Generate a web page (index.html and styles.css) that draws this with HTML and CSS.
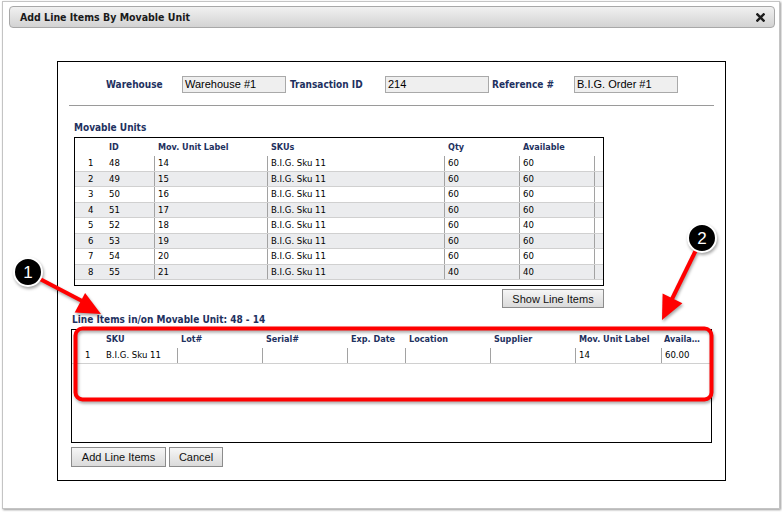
FILE: index.html
```html
<!DOCTYPE html>
<html>
<head>
<meta charset="utf-8">
<link rel="stylesheet" href="styles.css">
</head>
<body>
<div class="dialog">
  <div class="titlebar">
    <span class="title">Add Line Items By Movable Unit</span>
    <svg class="close" width="9" height="9" viewBox="0 0 9 9"><path d="M1.4 1.4 L7.6 7.6 M7.6 1.4 L1.4 7.6" stroke="#1e1e1e" stroke-width="2.4" stroke-linecap="square"/></svg>
  </div>
  <div class="panel">
    <div class="hdr">
      <span class="lbl l1">Warehouse</span><span class="inp">Warehouse #1</span>
      <span class="lbl l2">Transaction ID</span><span class="inp">214</span>
      <span class="lbl l3">Reference #</span><span class="inp">B.I.G. Order #1</span>
    </div>
    <div class="rule"></div>
    <div class="mu">
      <div class="sect">Movable Units</div>
      <div class="box mu-box">
        <div class="row mu-row head"><span class="c"></span><span class="c">ID</span><span class="c">Mov. Unit Label</span><span class="c">SKUs</span><span class="c">Qty</span><span class="c">Available</span></div>
        <div class="row mu-row data"><span class="c n">1</span><span class="c">48</span><span class="c s">14</span><span class="c s">B.I.G. Sku 11</span><span class="c s">60</span><span class="c s e">60</span></div>
        <div class="row mu-row data alt"><span class="c n">2</span><span class="c">49</span><span class="c s">15</span><span class="c s">B.I.G. Sku 11</span><span class="c s">60</span><span class="c s e">60</span></div>
        <div class="row mu-row data"><span class="c n">3</span><span class="c">50</span><span class="c s">16</span><span class="c s">B.I.G. Sku 11</span><span class="c s">60</span><span class="c s e">60</span></div>
        <div class="row mu-row data alt"><span class="c n">4</span><span class="c">51</span><span class="c s">17</span><span class="c s">B.I.G. Sku 11</span><span class="c s">60</span><span class="c s e">60</span></div>
        <div class="row mu-row data"><span class="c n">5</span><span class="c">52</span><span class="c s">18</span><span class="c s">B.I.G. Sku 11</span><span class="c s">60</span><span class="c s e">40</span></div>
        <div class="row mu-row data alt"><span class="c n">6</span><span class="c">53</span><span class="c s">19</span><span class="c s">B.I.G. Sku 11</span><span class="c s">60</span><span class="c s e">60</span></div>
        <div class="row mu-row data"><span class="c n">7</span><span class="c">54</span><span class="c s">20</span><span class="c s">B.I.G. Sku 11</span><span class="c s">60</span><span class="c s e">60</span></div>
        <div class="row mu-row data alt"><span class="c n">8</span><span class="c">55</span><span class="c s">21</span><span class="c s">B.I.G. Sku 11</span><span class="c s">40</span><span class="c s e">40</span></div>
      </div>
      <div class="btnrow"><button class="btn show">Show Line Items</button></div>
    </div>
    <div class="li">
      <div class="sect li-title">Line Items in/on Movable Unit: 48 - 14</div>
      <div class="box li-box">
        <div class="row li-row head"><span class="c"></span><span class="c">SKU</span><span class="c">Lot#</span><span class="c">Serial#</span><span class="c">Exp. Date</span><span class="c">Location</span><span class="c">Supplier</span><span class="c">Mov. Unit Label</span><span class="c trunc">Available</span></div>
        <div class="row li-row data"><span class="c n">1</span><span class="c">B.I.G. Sku 11</span><span class="c s"></span><span class="c s"></span><span class="c s"></span><span class="c s"></span><span class="c s"></span><span class="c s">14</span><span class="c s">60.00</span></div>
      </div>
      <div class="actions"><button class="btn add">Add Line Items</button><button class="btn cancel">Cancel</button></div>
    </div>
  </div>
</div>
<svg class="annot" width="782" height="512" viewBox="0 0 782 512">
  <g class="shadow">
    <rect x="75.5" y="328.5" width="636" height="71" rx="7" ry="7" fill="none" stroke="#ff0000" stroke-width="4"/>
    <line x1="40" y1="279" x2="84" y2="302" stroke="#ff0000" stroke-width="4"/>
    <polygon points="101,314 74.7,312.4 85.1,293" fill="#ff0000"/>
    <line x1="696" y1="250" x2="672" y2="299" stroke="#ff0000" stroke-width="4"/>
    <polygon points="662,320 682.4,303.2 662.6,293.6" fill="#ff0000"/>
    <circle cx="28" cy="272" r="14" fill="#000" stroke="#fff" stroke-width="2"/>
    <circle cx="702" cy="238" r="14" fill="#000" stroke="#fff" stroke-width="2"/>
  </g>
  <text x="28" y="278" class="num">1</text>
  <text x="702" y="244" class="num">2</text>
</svg>
</body>
</html>
```
FILE: styles.css
```css
html, body {
  margin: 0;
  padding: 0;
}
body {
  width: 782px;
  height: 512px;
  background: #ffffff;
  position: relative;
  overflow: hidden;
  font-family: "DejaVu Sans Condensed", "DejaVu Sans", sans-serif;
  font-stretch: condensed;
}
.dialog {
  box-sizing: border-box;
  margin: 1px 0 0 2px;
  width: 778px;
  height: 508px;
  border: 1px solid #c4c4c4;
  box-shadow: 1px 1px 2px rgba(0, 0, 0, 0.4);
  padding: 4px 4px 0 6px;
  background: #fff;
}
.titlebar {
  box-sizing: border-box;
  height: 22px;
  border: 1px solid #a8a8a8;
  border-radius: 4px;
  background: linear-gradient(#f1f1f1, #d3d3d3);
  display: flex;
  align-items: center;
  justify-content: space-between;
  padding: 0 9px 0 10px;
}
.title {
  font-weight: bold;
  font-size: 10.5px;
  color: #1a1a1a;
}
.close {
  display: block;
}
.panel {
  box-sizing: border-box;
  margin: 33px 0 0 48px;
  width: 669px;
  height: 420px;
  border: 1px solid #000;
  display: flex;
  flex-direction: column;
}
.hdr {
  margin-top: 14px;
  padding-left: 48px;
  display: flex;
  align-items: center;
  height: 17px;
}
.lbl {
  font-weight: bold;
  font-size: 10px;
  color: #1e3160;
}
.l1 { width: 76px; }
.l2 { width: 95px; margin-left: 4px; }
.l3 { width: 82px; margin-left: 3px; }
.inp {
  box-sizing: border-box;
  width: 104px;
  height: 17px;
  background: #efefef;
  border: 1px solid #a9a9a9;
  font-family: "Liberation Sans", Arial, sans-serif;
  font-stretch: normal;
  font-size: 11px;
  line-height: 15px;
  padding-left: 2px;
  color: #000;
}
.rule {
  margin: 12px 11px 0 11px;
  border-top: 1px solid #9a9a9a;
}
.sect {
  font-weight: bold;
  font-size: 10px;
  line-height: 12px;
  color: #1e3160;
}
.mu {
  margin-left: 16px;
  width: 530px;
}
.mu .sect {
  margin-top: 16px;
  margin-bottom: 3px;
}
.box {
  box-sizing: border-box;
  border: 1px solid #000;
  background: #fff;
}
.mu-box { height: 149px; }
.row {
  display: grid;
  font-size: 9.5px;
  color: #000;
}
.mu-row { grid-template-columns: 30px 49px 113px 177px 75px 76px; }
.li-row { grid-template-columns: 30px 75px 85px 85px 58px 85px 85px 86px 50px; }
.row.head {
  height: 18px;
  line-height: 18px;
  font-size: 9px;
  font-weight: bold;
  color: #1e3160;
}
.row.data {
  box-sizing: border-box;
  height: 15.5px;
  line-height: 14.5px;
  border-bottom: 1px solid #d0d0d0;
}
.row.alt { background: #ebecee; }
.c {
  box-sizing: border-box;
  padding-left: 4px;
  white-space: nowrap;
  overflow: hidden;
}
.c.n { padding-left: 13px; }
.c.s { border-left: 1px solid #a2a2a2; padding-left: 3px; }
.c.e { border-right: 1px solid #a2a2a2; }
.c.trunc {
  text-overflow: ellipsis;
  padding-right: 8px;
  padding-left: 3px;
}
.btnrow {
  margin-top: 3px;
  display: flex;
  justify-content: flex-end;
}
.btn {
  box-sizing: border-box;
  height: 19px;
  padding: 0;
  border: 1px solid #8c8c8c;
  border-radius: 0;
  background: linear-gradient(#f6f6f6, #dadada);
  font-family: "Liberation Sans", Arial, sans-serif;
  font-stretch: normal;
  font-size: 11px;
  color: #111;
}
.show { width: 102px; }
.li {
  margin-left: 13px;
  width: 641px;
}
.li-title {
  margin-top: 6px;
  margin-bottom: 3px;
  padding-left: 1px;
}
.li-box { height: 114px; }
.actions {
  margin-top: 4px;
  display: flex;
  gap: 3px;
}
.add { width: 95px; height: 20px; }
.cancel { width: 54px; height: 20px; }
.annot {
  position: absolute;
  left: 0;
  top: 0;
  pointer-events: none;
}
.shadow {
  filter: drop-shadow(1px 2px 1.5px rgba(0, 0, 0, 0.35));
}
.num {
  font-family: "Liberation Sans", Arial, sans-serif;
  font-size: 17px;
  fill: #fff;
  text-anchor: middle;
}
```
